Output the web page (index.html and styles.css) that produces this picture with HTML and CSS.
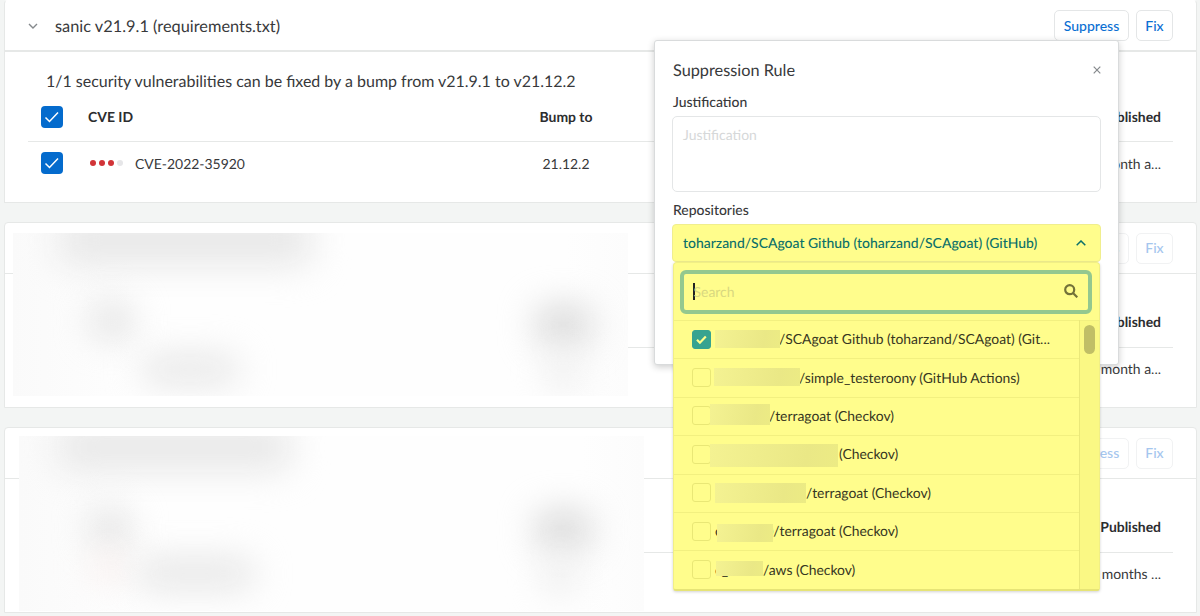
FILE: index.html
```html
<!DOCTYPE html>
<html lang="en">
<head>
<meta charset="utf-8">
<title>Suppression Rule</title>
<link rel="stylesheet" href="styles.css">
</head>
<body>
<main class="page">
  <section class="card card-first">
    <header class="card-head">
      <svg class="chevron" viewBox="0 0 10 6"><path d="M1 1l4 4 4-4"/></svg>
      <h2 class="pkg">sanic v21.9.1 (requirements.txt)</h2>
      <button class="btn btn-suppress">Suppress</button>
      <button class="btn btn-fix">Fix</button>
    </header>
    <p class="summary">1/1 security vulnerabilities can be fixed by a bump from v21.9.1 to v21.12.2</p>
    <div class="row row-head">
      <span class="check"><svg viewBox="0 0 22 22"><path d="M4.500 11.500l4 4 8.500-9"/></svg></span>
      <span class="cve">CVE ID</span>
      <span class="bump">Bump to</span>
      <span class="published">Published</span>
    </div>
    <div class="row">
      <span class="check"><svg viewBox="0 0 22 22"><path d="M4.500 11.500l4 4 8.500-9"/></svg></span>
      <span class="cve"><span class="dots"><i></i><i></i><i></i><i class="off"></i></span>CVE-2022-35920</span>
      <span class="bump">21.12.2</span>
      <span class="published">1 month a...</span>
    </div>
  </section>

  <section class="card">
    <header class="card-head">
      <button class="btn btn-suppress faded">Suppress</button>
      <button class="btn btn-fix faded">Fix</button>
    </header>
    <div class="row row-head"><span class="published">Published</span></div>
    <div class="row"><span class="published">1 month a...</span></div>
    <div class="redacted redacted-a">
      <i class="blob title"></i><i class="blob id"></i><i class="blob cve-id"></i><i class="blob ver"></i><i class="blob ver-low"></i>
    </div>
  </section>

  <section class="card">
    <header class="card-head">
      <button class="btn btn-suppress faded">Suppress</button>
      <button class="btn btn-fix faded">Fix</button>
    </header>
    <div class="row row-head"><span class="published">Published</span></div>
    <div class="row"><span class="published">2 months ...</span></div>
    <div class="redacted redacted-b">
      <i class="blob title"></i><i class="blob id"></i><i class="blob sev"></i><i class="blob cve-id"></i><i class="blob ver"></i><i class="blob ver-low"></i>
    </div>
  </section>
</main>

<div class="modal">
  <div class="modal-head">
    <h3 class="modal-title">Suppression Rule</h3>
    <svg class="close" viewBox="0 0 8 8"><path d="M.7.7l6.600 6.600M7.300.7L.7 7.300"/></svg>
  </div>
  <div class="label">Justification</div>
  <div class="textarea">Justification</div>
  <div class="label label-repos">Repositories</div>
  <div class="select">
    <span class="select-text">toharzand/SCAgoat Github (toharzand/SCAgoat) (GitHub)</span>
    <svg class="caret" viewBox="0 0 10 6"><path d="M.7 5.300L5 1l4.300 4.300"/></svg>
  </div>
  <div class="dropdown">
    <div class="search">
      <span class="cursor"></span><span class="search-text">Search</span>
      <svg class="lens" viewBox="0 0 14 14"><circle cx="5.700" cy="5.700" r="4.500"/><path d="M9 9l4.300 4.300"/></svg>
    </div>
    <div class="options">
      <div class="list">
        <div class="option"><span class="box box-on"><svg viewBox="0 0 17 17"><path d="M4 8.800l2.900 2.900 5.900-6.200"/></svg></span><span class="mask m1"></span><span class="name n1">/SCAgoat Github (toharzand/SCAgoat) (Git...</span></div>
        <div class="option"><span class="box"></span><span class="mask m2"></span><span class="name n2">/simple_testeroony (GitHub Actions)</span></div>
        <div class="option"><span class="box"></span><span class="mask m3"></span><span class="name n3">/terragoat (Checkov)</span></div>
        <div class="option"><span class="box"></span><span class="mask m4"></span><span class="name n4">(Checkov)</span></div>
        <div class="option"><span class="box"></span><span class="mask m5"></span><span class="name n5">/terragoat (Checkov)</span></div>
        <div class="option"><span class="box"></span><span class="sliver">c</span><span class="mask m6"></span><span class="name n6"><span class="tail">)</span>/terragoat (Checkov)</span></div>
        <div class="option"><span class="box"></span><span class="sliver under">c_</span><span class="mask m7"></span><span class="name n7">/aws (Checkov)</span></div>
      </div>
      <div class="track"><div class="thumb"></div></div>
    </div>
  </div>
</div>
</body>
</html>
```

FILE: styles.css
```css
* { box-sizing: border-box; }

body {
  margin: 0;
  width: 1200px;
  height: 616px;
  overflow: hidden;
  background: #f3f5f4;
  color: #38393b;
  font-family: Lato, sans-serif;
  font-size: 13.95px;
  text-rendering: geometricPrecision;
  position: relative;
}

.page {
  display: flex;
  flex-direction: column;
  gap: 19px;
  padding: 0 3px 0 4px;
}

.card {
  position: relative;
  height: 186px;
  flex: none;
  background: #fff;
  border: 1px solid #e6e8e7;
  border-radius: 4px 4px 0 0;
}
.card-first { height: 203px; border-top-color: #fff; }

.card-head {
  display: flex;
  align-items: center;
  justify-content: flex-end;
  gap: 7px;
  height: 51px;
  padding-right: 23px;
  border-bottom: 1px solid #e6e8e7;
}
.card-first .card-head { height: 51px; border-bottom-width: 2px; }

.chevron { width: 10px; height: 6px; margin: 0 10px 0 23px; }
.chevron path { fill: none; stroke: #85898c; stroke-width: 1.4; }
.pkg { flex: 1; margin: 1px 0 0; font-size: 16.35px; font-weight: 400; }

.btn {
  height: 31px;
  padding: 0 0 1px;
  background: #fff;
  border: 1px solid #e4e6e7;
  border-radius: 5px;
  color: #0b6fd3;
  font: 500 14px Lato, sans-serif;
}
.btn-suppress { width: 75px; }
.btn-fix { width: 37px; }
.btn.faded { color: #a5c6ee; border-color: #f1f2f3; }

.summary { margin: 20px 0 0 41px; font-size: 15.97px; line-height: 20px; white-space: nowrap; }

.row { display: flex; align-items: center; height: 40px; margin: 0 23px; padding-right: 12px; }
.row-head { height: 74px; padding-top: 22px; border-bottom: 1px solid #e6e8e7; font-weight: 700; color: #2c2d2f; }
.card-first .row { height: 42px; }
.card-first .row-head { height: 50px; padding-top: 0; }

.check {
  width: 22px;
  height: 22px;
  margin: 0 25px 0 13px;
  border-radius: 4px;
  background: #046bcd;
}
.check svg { display: block; }
.check path { fill: none; stroke: #fff; stroke-width: 1.5; }
.cve { display: flex; align-items: center; width: 428px; }
.bump { width: 100px; text-align: center; }
.published { margin-left: auto; }

.dots { display: flex; gap: 3px; margin: 0 12px 0 2px; }
.dots i { width: 6px; height: 6px; border-radius: 50%; background: #d13438; }
.dots .off { background: #e6e6e8; }

/* Blurred-out card contents */
.redacted {
  position: absolute;
  overflow: hidden;
  background: linear-gradient(90deg, #fafafa, #fefefe 20%, #fefefe 90%, #fcfcfc);
}
.redacted-a { left: 8px; top: 10px; width: 615px; height: 163px; }
.redacted-b { left: 14px; top: 8px; width: 625px; height: 175px; }
.blob { position: absolute; border-radius: 16px; background: #e2e2e2; filter: blur(17px); }
.title { background: #e9e9e9; }
.redacted-a .title { left: 45px; top: -20px; width: 255px; height: 54px; }
.redacted-a .id { left: 78px; top: 70px; width: 42px; height: 36px; }
.redacted-a .cve-id { left: 128px; top: 122px; width: 98px; height: 29px; background: #e6e6e6; }
.redacted-a .ver { left: 522px; top: 72px; width: 57px; height: 40px; background: #dadada; }
.redacted-a .ver-low { left: 533px; top: 118px; width: 34px; height: 40px; background: #eeeeee; }
.redacted-b .title { left: 38px; top: -14px; width: 235px; height: 50px; }
.redacted-b .id { left: 70px; top: 74px; width: 42px; height: 36px; }
.redacted-b .sev { left: 72px; top: 118px; width: 34px; height: 26px; background: #f9eeec; }
.redacted-b .cve-id { left: 116px; top: 122px; width: 120px; height: 31px; background: #e6e6e6; }
.redacted-b .ver { left: 516px; top: 74px; width: 57px; height: 40px; background: #dadada; }
.redacted-b .ver-low { left: 524px; top: 118px; width: 34px; height: 42px; background: #eeeeee; }

.modal {
  position: absolute;
  left: 654px;
  top: 40px;
  width: 465px;
  height: 325px;
  padding: 18px 18px 0;
  background: #fff;
  border: 1px solid #d9dbdc;
  border-radius: 3px;
  box-shadow: 0 2px 7px rgba(0, 0, 0, 0.2);
}
.modal-head { display: flex; align-items: center; justify-content: space-between; height: 22px; }
.modal-title { margin: 1px 0 0; font-size: 16.3px; font-weight: 400; }
.close { width: 8px; height: 8px; margin-right: -1px; }
.close path { fill: none; stroke: #85898c; stroke-width: 1.2; }
.label { margin-top: 12px; height: 18px; line-height: 18px; font-weight: 500; }
.label-repos { margin-top: 9px; }
.textarea {
  height: 76px;
  margin: 5px -1px 0;
  padding: 9px 10px;
  border: 1px solid #e4e6e7;
  border-radius: 5px;
  color: #d6d8d9;
  line-height: 18px;
}
.select {
  display: flex;
  align-items: center;
  justify-content: space-between;
  height: 38px;
  margin: 5px -1px 0;
  padding: 0 14px 2px 10px;
  background: #fffd8c;
  border: 1px solid #f0ee8e;
  border-radius: 4px;
  color: #0b7069;
  font-weight: 500;
  white-space: nowrap;
}
.caret { width: 10px; height: 6px; margin-top: 1px; }
.caret path { fill: none; stroke: #0b7069; stroke-width: 1.5; }

.dropdown {
  position: absolute;
  left: 18px;
  top: 221px;
  width: 427px;
  height: 329px;
  padding: 7px 7px 0;
  background: #fffd8c;
  border: 1px solid #f1ef85;
  border-bottom: 2px solid #e6e476;
  border-radius: 4px 4px 3px 3px;
  box-shadow: 0 1px 3px rgba(0, 0, 0, 0.18);
  color: #36361f;
}
.search {
  display: flex;
  align-items: center;
  width: 412px;
  height: 44px;
  margin-left: -1px;
  padding: 0 10px 2px 9px;
  border: 4px solid #94c88f;
  border-radius: 6px;
  color: #d9d880;
}
.cursor { width: 1.5px; height: 17px; background: #222; }
.search-text { flex: 1; margin-left: -1px; }
.lens { width: 14px; height: 14px; }
.lens circle, .lens path { fill: none; stroke: #737239; stroke-width: 2.2; }

.options { display: flex; height: 269px; margin: 6px -7px 0; }
.list { width: 406px; border-right: 1px solid #eae87a; }
.option {
  display: flex;
  align-items: center;
  position: relative;
  height: 38.400px;
  padding: 0 0 1px 18px;
  border-top: 1px solid #f2f080;
  font-size: 13.9px;
  white-space: nowrap;
}
.name { margin-top: -1px; }
.box {
  width: 19px;
  height: 19px;
  flex: none;
  border: 1px solid #e9e776;
  border-radius: 3px;
}
.box-on { background: #37a390; border-color: #37a390; }
.box-on svg { display: block; width: 17px; height: 17px; }
.box-on path { fill: none; stroke: #fffd8c; stroke-width: 2.2; }
.mask {
  flex: none;
  z-index: 1;
  height: 18px;
  background: linear-gradient(100deg, #f4f292, #eae886 75%, #eceb84);
}
.m1 { width: 65px; margin-left: 4px; margin-top: -1px; }
.m2 { width: 86px; margin-left: 3px; margin-top: -2px; }
.m3 { width: 60px; height: 21px; margin-left: -1px; margin-top: -2px; }
.m4 { width: 128px; height: 23px; margin-left: -1px; margin-top: 3px; }
.m5 { width: 91px; height: 20px; margin-left: 4px; }
.m6 { width: 56px; margin-left: -5px; margin-top: 3px; }
.m7 { width: 47px; height: 15px; margin-left: -13px; margin-top: -3px; }
.n1, .n2, .n3 { margin-left: -1px; }
.n4 { margin-left: 1px; }
.sliver { margin: -1px 0 0 4px; }
.under { width: 14px; }
.tail { margin-left: -3px; }

.track { flex: 1; padding: 4px 0 0 4px; background: #faf884; border-top: 1px solid #f2f080; }
.thumb { width: 11px; height: 29px; border-radius: 6px; background: #c0be66; }
```
